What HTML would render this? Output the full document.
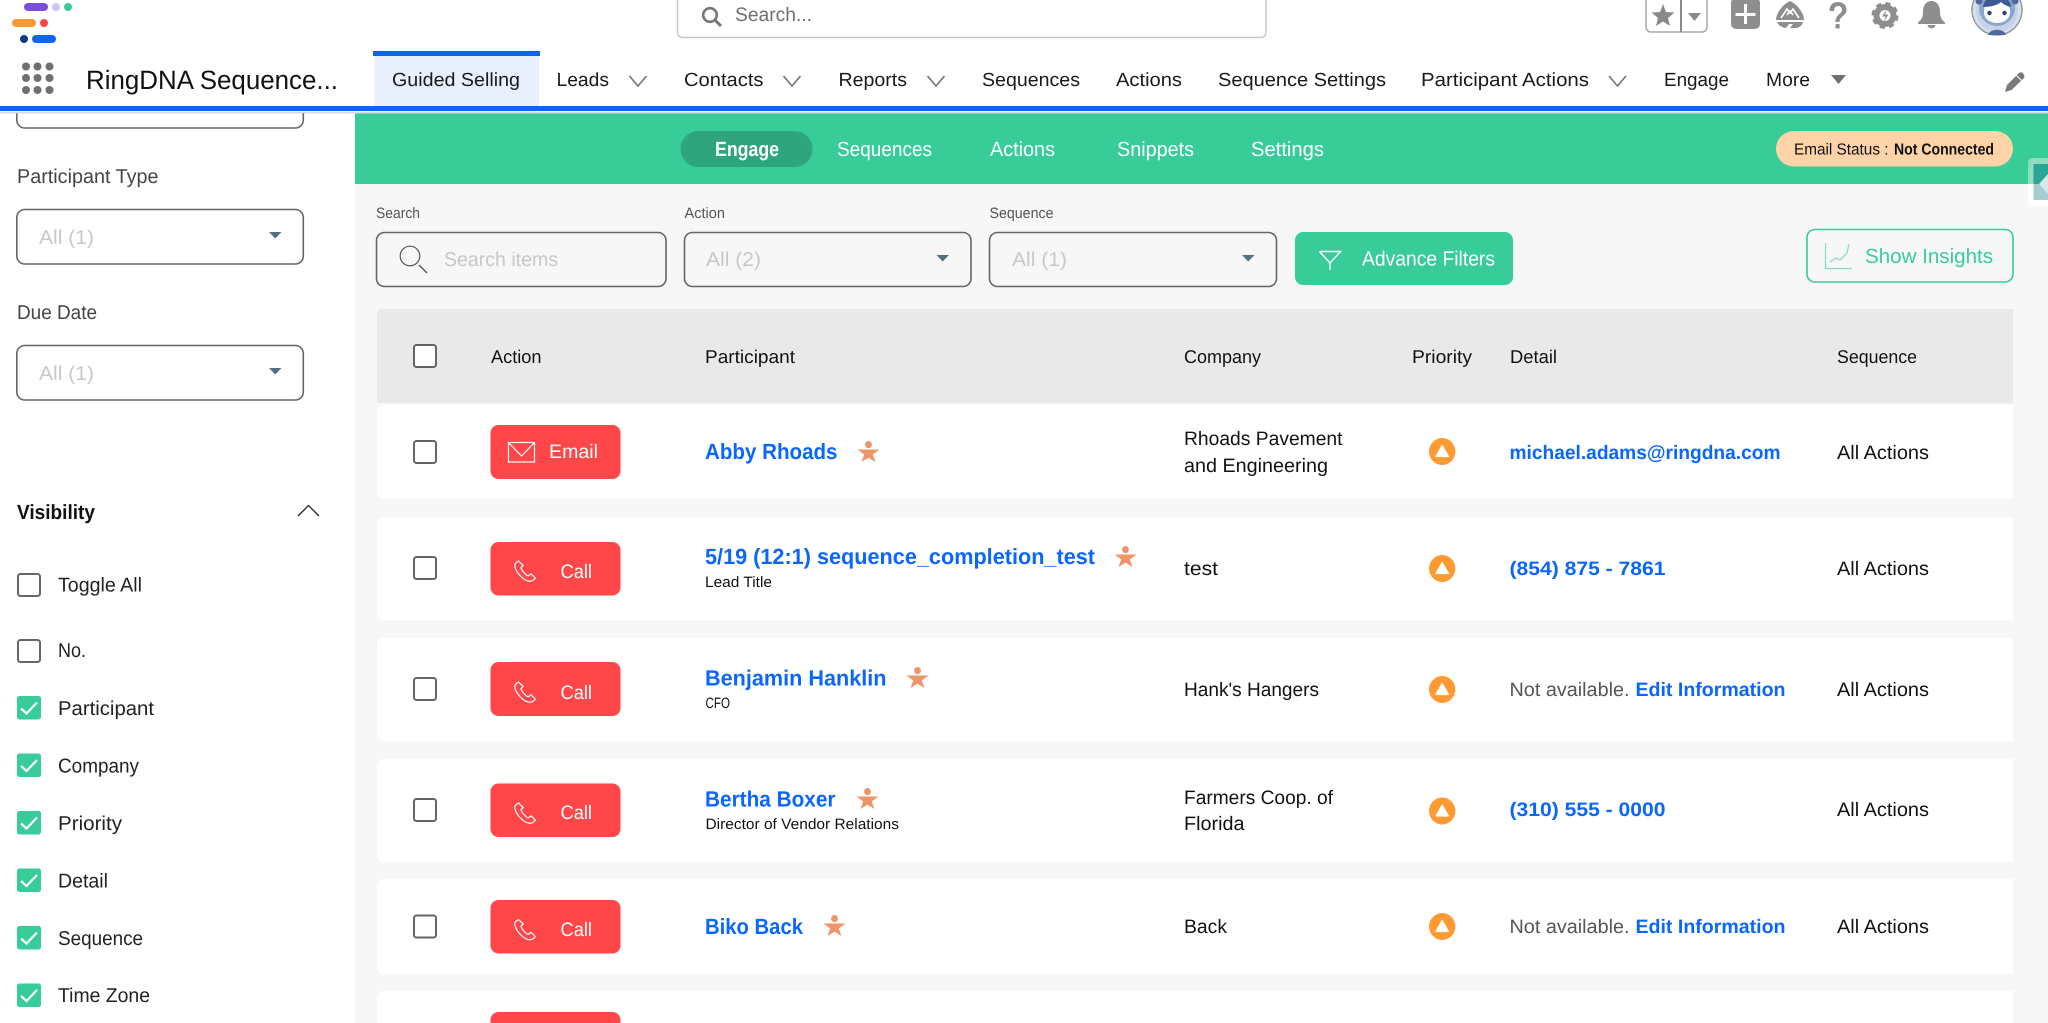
<!DOCTYPE html>
<html lang="en">
<head>
<meta charset="utf-8">
<title>RingDNA Sequence</title>
<style>
html,body{margin:0;padding:0;width:2048px;height:1023px;overflow:hidden;background:#fff}
svg{display:block}
text{font-family:"Liberation Sans",Arial,sans-serif;text-rendering:geometricPrecision}
.n{font-size:19px;fill:#1a1a1a}
.l{font-size:20px;fill:#444}
.s{font-size:15px;fill:#555}
.p{font-size:20px;fill:#c8c8c8}
.h{font-size:18.5px;fill:#111}
.w{font-size:19.5px;fill:#fff}
.b{font-size:22px;fill:#0a66ff;font-weight:700}
.t{font-size:15px;fill:#111}
.c{font-size:19.5px;fill:#111}
.d{font-size:19.5px;fill:#0a66ff;font-weight:700}
.g{font-size:19.5px;fill:#555}
.v{font-size:20px;fill:#222}
.e{font-size:20.5px;fill:#fff}
.sel{fill:none;stroke:#666;stroke-width:1.6}
.chev{fill:none;stroke:#777;stroke-width:1.7}
</style>
</head>
<body>
<svg width="2048" height="1023" viewBox="0 0 2048 1023" xmlns="http://www.w3.org/2000/svg">
<defs>
<g id="person" fill="#ef9469"><ellipse cx="11" cy="3.6" rx="3.4" ry="3.6"/><path d="M0 8.5 L22 8.5 L15.3 13.5 L18 21 L11 16.6 L4 21 L6.7 13.5 Z"/></g>
<path id="phone" fill="none" stroke="#fff" stroke-width="1.2" d="M4.5 1 L1.6 3.2 C-0.4 5.5 2 11.5 6 15.5 C10 20 15 22.5 18.5 20.6 L21.5 18.2 L17 13.8 L14.2 16 C11.5 15 7.5 10.2 7 7.6 L9.3 5.5 Z"/>
<g id="cb"><rect x="1" y="1" width="22" height="22" rx="2.5" fill="#fff" stroke="#666" stroke-width="2"/></g>
<g id="ck"><rect width="24" height="23.5" rx="2.5" fill="#38cc98"/><path d="M4 12.5 L9.5 17.5 L20 6.5" fill="none" stroke="#fff" stroke-width="2.2"/></g>
<g id="pri"><ellipse cx="13.2" cy="13.5" rx="13.2" ry="13.5" fill="#ff9a33"/><path d="M13.2 7.5 L19.5 18.5 L6.9 18.5 Z" fill="#fff" stroke="#fff" stroke-width="1.2" stroke-linejoin="round"/></g>
<path id="chev" class="chev" d="M0 0 L8.5 10 L17 0"/>
<path id="arr" fill="#54707f" d="M0 0 H12.5 L6.2 6.5 Z"/>
</defs>

<!-- sidebar -->
<rect x="0" y="100" width="355" height="923" fill="#fff"/>
<rect x="16.8" y="90" width="286.5" height="38" rx="8" class="sel"/>
<text x="17" y="183" class="l" textLength="141.5" lengthAdjust="spacingAndGlyphs">Participant Type</text>
<rect x="16.8" y="209.5" width="286.5" height="54.5" rx="8" class="sel"/>
<text x="39" y="244" class="p" textLength="55" lengthAdjust="spacingAndGlyphs">All (1)</text>
<use href="#arr" x="269" y="232"/>
<text x="17" y="319" class="l" textLength="80" lengthAdjust="spacingAndGlyphs">Due Date</text>
<rect x="16.8" y="345.5" width="286.5" height="54.5" rx="8" class="sel"/>
<text x="39" y="380" class="p" textLength="55" lengthAdjust="spacingAndGlyphs">All (1)</text>
<use href="#arr" x="269" y="368"/>
<text x="17" y="519" font-size="20.5" font-weight="700" fill="#111" textLength="78" lengthAdjust="spacingAndGlyphs">Visibility</text>
<path d="M298 516 L308.5 505.5 L319 516" fill="none" stroke="#222" stroke-width="1.3"/>
<use href="#cb" x="17" y="573"/>
<text x="58" y="591.5" class="v" textLength="84" lengthAdjust="spacingAndGlyphs">Toggle All</text>
<use href="#cb" x="17" y="639"/>
<text x="58" y="657" class="v" textLength="28" lengthAdjust="spacingAndGlyphs">No.</text>
<use href="#ck" x="17" y="696"/>
<text x="58" y="715" class="v" textLength="96" lengthAdjust="spacingAndGlyphs">Participant</text>
<use href="#ck" x="17" y="753.5"/>
<text x="58" y="772.5" class="v" textLength="81" lengthAdjust="spacingAndGlyphs">Company</text>
<use href="#ck" x="17" y="811"/>
<text x="58" y="830" class="v" textLength="64" lengthAdjust="spacingAndGlyphs">Priority</text>
<use href="#ck" x="17" y="868.5"/>
<text x="58" y="887.7" class="v" textLength="50" lengthAdjust="spacingAndGlyphs">Detail</text>
<use href="#ck" x="17" y="926"/>
<text x="58" y="945" class="v" textLength="85" lengthAdjust="spacingAndGlyphs">Sequence</text>
<use href="#ck" x="17" y="983.5"/>
<text x="58" y="1002" class="v" textLength="92" lengthAdjust="spacingAndGlyphs">Time Zone</text>

<!-- content -->
<rect x="355" y="113" width="1693" height="910" fill="#f7f7f7"/>
<rect x="355" y="113.5" width="1693" height="70.5" fill="#38cc98"/>
<rect x="680.5" y="131" width="132" height="36" rx="18" fill="#2ea57c"/>
<text x="715" y="156" class="e" font-weight="700" textLength="64" lengthAdjust="spacingAndGlyphs">Engage</text>
<text x="837" y="156" class="e" textLength="95" lengthAdjust="spacingAndGlyphs">Sequences</text>
<text x="990" y="156" class="e" textLength="65" lengthAdjust="spacingAndGlyphs">Actions</text>
<text x="1117" y="156" class="e" textLength="77" lengthAdjust="spacingAndGlyphs">Snippets</text>
<text x="1251" y="156" class="e" textLength="73" lengthAdjust="spacingAndGlyphs">Settings</text>
<rect x="1776" y="131" width="237" height="35.5" rx="17.7" fill="#fdd3a7"/>
<text x="1794" y="154.5" font-size="16" fill="#111" textLength="94.5" lengthAdjust="spacingAndGlyphs">Email Status :</text>
<text x="1894" y="154.5" font-size="16" font-weight="700" fill="#111" textLength="100" lengthAdjust="spacingAndGlyphs">Not Connected</text>
<!-- side handle -->
<path d="M2048 158 H2033 Q2028 158 2028 163 V184 H2048 Z" fill="#8fdcc0"/>
<path d="M2048 206 H2033 Q2028 206 2028 201 V184 H2048 Z" fill="#fff"/>
<rect x="2033.5" y="164" width="15" height="20" fill="#2ba696"/>
<rect x="2033.5" y="184" width="15" height="16" fill="#a6ced2"/>
<path d="M2048 174 L2039 184 L2048 194 Z" fill="#d8e8e8"/>

<!-- filters -->
<text x="376" y="218" class="s" textLength="44" lengthAdjust="spacingAndGlyphs">Search</text>
<rect x="376.5" y="232.5" width="289.5" height="54" rx="8" class="sel"/>
<circle cx="410" cy="256" r="9.8" fill="none" stroke="#555" stroke-width="1.2"/>
<path d="M419 265 L427 273" stroke="#555" stroke-width="1.4"/>
<text x="444" y="266" class="p" textLength="114" lengthAdjust="spacingAndGlyphs">Search items</text>
<text x="684.5" y="218" class="s" textLength="40.5" lengthAdjust="spacingAndGlyphs">Action</text>
<rect x="684.5" y="232.5" width="286.5" height="54" rx="8" class="sel"/>
<text x="706" y="266" class="p" textLength="55" lengthAdjust="spacingAndGlyphs">All (2)</text>
<use href="#arr" x="936.5" y="255"/>
<text x="989.5" y="218" class="s" textLength="64" lengthAdjust="spacingAndGlyphs">Sequence</text>
<rect x="989.5" y="232.5" width="287" height="54" rx="8" class="sel"/>
<text x="1012" y="266" class="p" textLength="55" lengthAdjust="spacingAndGlyphs">All (1)</text>
<use href="#arr" x="1242" y="255"/>
<rect x="1295" y="232" width="218" height="53" rx="8" fill="#38cc98"/>
<path d="M1319.5 251.5 H1340.5 L1330 263 V270 M1319.5 251.5 L1330 263" fill="none" stroke="#fff" stroke-width="1.4"/>
<text x="1362" y="265.5" class="e" textLength="133" lengthAdjust="spacingAndGlyphs">Advance Filters</text>
<rect x="1807" y="229.5" width="206" height="52.5" rx="8" fill="none" stroke="#38cc98" stroke-width="1.6"/>
<path d="M1825.5 243 V268.5 H1852 M1830 262 L1836 258 L1840 260 L1847 253 L1849 244" fill="none" stroke="#82dcbd" stroke-width="1.2"/>
<text x="1865" y="263" font-size="20.5" fill="#38cc98" textLength="128" lengthAdjust="spacingAndGlyphs">Show Insights</text>

<!-- table header -->
<path d="M377 403 V315 Q377 309 383 309 H2013 V403 Z" fill="#e9e9e9"/>
<use href="#cb" x="413" y="344"/>
<text x="491" y="363" class="h" textLength="50.5" lengthAdjust="spacingAndGlyphs">Action</text>
<text x="705" y="363" class="h" textLength="90" lengthAdjust="spacingAndGlyphs">Participant</text>
<text x="1184" y="363" class="h" textLength="77" lengthAdjust="spacingAndGlyphs">Company</text>
<text x="1412" y="363" class="h" textLength="60" lengthAdjust="spacingAndGlyphs">Priority</text>
<text x="1510" y="363" class="h" textLength="47" lengthAdjust="spacingAndGlyphs">Detail</text>
<text x="1837" y="363" class="h" textLength="80" lengthAdjust="spacingAndGlyphs">Sequence</text>

<!-- row 1 -->
<path d="M385 405 H2013 V499 H385 Q377 499 377 491 V413 Q377 405 385 405 Z" fill="#fff"/>
<use href="#cb" x="413" y="440"/>
<rect x="490.5" y="425" width="130" height="54" rx="8" fill="#ff4648"/>
<rect x="508.5" y="442.5" width="26" height="19.5" fill="none" stroke="#fff" stroke-width="1.2"/>
<path d="M508.5 442.5 L521.5 456 L534.5 442.5" fill="none" stroke="#fff" stroke-width="1.2"/>
<text x="549" y="458" class="w" textLength="49" lengthAdjust="spacingAndGlyphs">Email</text>
<text x="705" y="459" class="b" textLength="132.5" lengthAdjust="spacingAndGlyphs">Abby Rhoads</text>
<use href="#person" x="857.5" y="441"/>
<text x="1184" y="445" class="c" textLength="158.5" lengthAdjust="spacingAndGlyphs">Rhoads Pavement</text>
<text x="1184" y="472" class="c" textLength="144" lengthAdjust="spacingAndGlyphs">and Engineering</text>
<use href="#pri" x="1429" y="438"/>
<text x="1509.5" y="459" class="d" textLength="271" lengthAdjust="spacingAndGlyphs">michael.adams@ringdna.com</text>
<text x="1837" y="459" class="c" textLength="92" lengthAdjust="spacingAndGlyphs">All Actions</text>

<!-- row 2 -->
<path d="M385 517 H2013 V620 H385 Q377 620 377 612 V525 Q377 517 385 517 Z" fill="#fff"/>
<use href="#cb" x="413" y="556"/>
<rect x="490.5" y="542" width="130" height="53.5" rx="8" fill="#ff4648"/>
<use href="#phone" x="514" y="560"/>
<text x="560.5" y="578" class="w" textLength="31.5" lengthAdjust="spacingAndGlyphs">Call</text>
<text x="705" y="564" class="b" textLength="390" lengthAdjust="spacingAndGlyphs">5/19 (12:1) sequence_completion_test</text>
<use href="#person" x="1114.5" y="546"/>
<text x="705" y="587" class="t" textLength="67" lengthAdjust="spacingAndGlyphs">Lead Title</text>
<text x="1184" y="575" class="c" textLength="34" lengthAdjust="spacingAndGlyphs">test</text>
<use href="#pri" x="1429" y="555"/>
<text x="1509.5" y="575" class="d" textLength="156" lengthAdjust="spacingAndGlyphs">(854) 875 - 7861</text>
<text x="1837" y="575" class="c" textLength="92" lengthAdjust="spacingAndGlyphs">All Actions</text>

<!-- row 3 -->
<path d="M385 638 H2013 V741 H385 Q377 741 377 733 V646 Q377 638 385 638 Z" fill="#fff"/>
<use href="#cb" x="413" y="677"/>
<rect x="490.5" y="662" width="130" height="54" rx="8" fill="#ff4648"/>
<use href="#phone" x="514" y="681"/>
<text x="560.5" y="699" class="w" textLength="31.5" lengthAdjust="spacingAndGlyphs">Call</text>
<text x="705" y="685.5" class="b" textLength="181.5" lengthAdjust="spacingAndGlyphs">Benjamin Hanklin</text>
<use href="#person" x="906.5" y="667"/>
<text x="705.5" y="708" class="t" textLength="24.5" lengthAdjust="spacingAndGlyphs">CFO</text>
<text x="1184" y="696" class="c" textLength="135" lengthAdjust="spacingAndGlyphs">Hank's Hangers</text>
<use href="#pri" x="1429" y="676"/>
<text x="1509.5" y="696" class="g" textLength="120" lengthAdjust="spacingAndGlyphs">Not available.</text>
<text x="1635.5" y="696" class="d" textLength="150" lengthAdjust="spacingAndGlyphs">Edit Information</text>
<text x="1837" y="696" class="c" textLength="92" lengthAdjust="spacingAndGlyphs">All Actions</text>

<!-- row 4 -->
<path d="M385 759 H2013 V862 H385 Q377 862 377 854 V767 Q377 759 385 759 Z" fill="#fff"/>
<use href="#cb" x="413" y="798"/>
<rect x="490.5" y="783.5" width="130" height="53.5" rx="8" fill="#ff4648"/>
<use href="#phone" x="514" y="802"/>
<text x="560.5" y="819" class="w" textLength="31.5" lengthAdjust="spacingAndGlyphs">Call</text>
<text x="705" y="806.5" class="b" textLength="130.5" lengthAdjust="spacingAndGlyphs">Bertha Boxer</text>
<use href="#person" x="856.5" y="788"/>
<text x="705.5" y="829" class="t" textLength="193.5" lengthAdjust="spacingAndGlyphs">Director of Vendor Relations</text>
<text x="1184" y="804" class="c" textLength="149" lengthAdjust="spacingAndGlyphs">Farmers Coop. of</text>
<text x="1184" y="830" class="c" textLength="60.5" lengthAdjust="spacingAndGlyphs">Florida</text>
<use href="#pri" x="1429" y="797.5"/>
<text x="1509.5" y="816" class="d" textLength="156" lengthAdjust="spacingAndGlyphs">(310) 555 - 0000</text>
<text x="1837" y="816" class="c" textLength="92" lengthAdjust="spacingAndGlyphs">All Actions</text>

<!-- row 5 -->
<path d="M385 879 H2013 V974 H385 Q377 974 377 966 V887 Q377 879 385 879 Z" fill="#fff"/>
<use href="#cb" x="413" y="914.5"/>
<rect x="490.5" y="900" width="130" height="53.5" rx="8" fill="#ff4648"/>
<use href="#phone" x="514" y="918.5"/>
<text x="560.5" y="936" class="w" textLength="31.5" lengthAdjust="spacingAndGlyphs">Call</text>
<text x="705" y="934" class="b" textLength="98" lengthAdjust="spacingAndGlyphs">Biko Back</text>
<use href="#person" x="823.5" y="915"/>
<text x="1184" y="933" class="c" textLength="43" lengthAdjust="spacingAndGlyphs">Back</text>
<use href="#pri" x="1429" y="913"/>
<text x="1509.5" y="933" class="g" textLength="120" lengthAdjust="spacingAndGlyphs">Not available.</text>
<text x="1635.5" y="933" class="d" textLength="150" lengthAdjust="spacingAndGlyphs">Edit Information</text>
<text x="1837" y="933" class="c" textLength="92" lengthAdjust="spacingAndGlyphs">All Actions</text>

<!-- row 6 -->
<path d="M385 991 H2013 V1040 H377 V999 Q377 991 385 991 Z" fill="#fff"/>
<rect x="490.5" y="1012" width="130" height="54" rx="8" fill="#ff4648"/>

<!-- header -->
<rect x="0" y="0" width="2048" height="106" fill="#fff"/>
<rect x="0" y="106" width="2048" height="5" fill="#0a66f0"/>
<rect x="0" y="111" width="2048" height="1" fill="#f2f2f2"/>
<rect x="0" y="112" width="2048" height="1.4" fill="#d8d8d8"/>
<!-- logo -->
<rect x="24" y="3" width="24" height="8" rx="4" fill="#7a4fe0"/>
<ellipse cx="56" cy="7" rx="4" ry="4" fill="#cfc4f5"/>
<ellipse cx="68" cy="7" rx="4" ry="4" fill="#38cc98"/>
<rect x="12" y="19" width="24" height="8" rx="4" fill="#ff9a33"/>
<ellipse cx="44" cy="23" rx="4" ry="4" fill="#ff4648"/>
<ellipse cx="24" cy="39" rx="4" ry="4" fill="#0c3b87"/>
<rect x="32" y="35" width="24" height="8" rx="4" fill="#0a66ff"/>
<!-- waffle -->
<g fill="#707070">
<circle cx="26" cy="66.5" r="4"/><circle cx="37.5" cy="66.5" r="4"/><circle cx="49.5" cy="66.5" r="4"/>
<circle cx="26" cy="78" r="4"/><circle cx="37.5" cy="78" r="4"/><circle cx="49.5" cy="78" r="4"/>
<circle cx="26" cy="90" r="4"/><circle cx="37.5" cy="90" r="4"/><circle cx="49.5" cy="90" r="4"/>
</g>
<text x="86" y="89" font-size="26.5" fill="#111" textLength="252" lengthAdjust="spacingAndGlyphs">RingDNA Sequence...</text>
<!-- active tab -->
<rect x="374.5" y="56" width="164.5" height="50" fill="#e8effd"/>
<rect x="373" y="51" width="167" height="5" fill="#0a66f0"/>
<text x="392" y="86" class="n" textLength="128" lengthAdjust="spacingAndGlyphs">Guided Selling</text>
<text x="556.5" y="86" class="n" textLength="52.5" lengthAdjust="spacingAndGlyphs">Leads</text>
<use href="#chev" x="629.5" y="76"/>
<text x="684" y="86" class="n" textLength="79.5" lengthAdjust="spacingAndGlyphs">Contacts</text>
<use href="#chev" x="783.5" y="76"/>
<text x="838.5" y="86" class="n" textLength="68.5" lengthAdjust="spacingAndGlyphs">Reports</text>
<use href="#chev" x="927.5" y="76"/>
<text x="982" y="86" class="n" textLength="98" lengthAdjust="spacingAndGlyphs">Sequences</text>
<text x="1116" y="86" class="n" textLength="66" lengthAdjust="spacingAndGlyphs">Actions</text>
<text x="1218" y="86" class="n" textLength="168" lengthAdjust="spacingAndGlyphs">Sequence Settings</text>
<text x="1421" y="86" class="n" textLength="168" lengthAdjust="spacingAndGlyphs">Participant Actions</text>
<use href="#chev" x="1609" y="76"/>
<text x="1664" y="86" class="n" textLength="65" lengthAdjust="spacingAndGlyphs">Engage</text>
<text x="1766" y="86" class="n" textLength="44" lengthAdjust="spacingAndGlyphs">More</text>
<path d="M1831 75 H1846 L1838.5 84 Z" fill="#707070"/>
<!-- pencil -->
<path d="M2005 92 L2007 85 L2019 73 Q2021 71.5 2023 73 L2024 75 Q2025 77 2023.5 78.5 L2011.5 90 Z" fill="#7a7a7a"/>
<path d="M2016.5 75.5 L2021.5 80.5" stroke="#fff" stroke-width="1"/>
<!-- top search -->
<rect x="677.5" y="-6" width="588.5" height="43.5" rx="5" fill="#fff" stroke="#c9c9c9" stroke-width="1.5"/>
<circle cx="710" cy="15" r="6.8" fill="none" stroke="#777" stroke-width="2.6"/>
<path d="M715 20 L721 26" stroke="#777" stroke-width="3"/>
<text x="735" y="21" font-size="19.5" fill="#707070" textLength="77" lengthAdjust="spacingAndGlyphs">Search...</text>
<!-- top right icons -->
<rect x="1646" y="-6" width="61" height="38" rx="5" fill="#fff" stroke="#a8a8a8" stroke-width="1.5"/>
<rect x="1680" y="0" width="2" height="32" fill="#8a8a8a"/>
<path d="M1663 4 L1666 12 L1674.5 12.5 L1668 18 L1670 26 L1663 21.5 L1656 26 L1658 18 L1651.5 12.5 L1660 12 Z" fill="#8a8a8a"/>
<path d="M1688 13 H1701 L1694.5 21 Z" fill="#8a8a8a"/>
<rect x="1731" y="-2" width="29" height="31" rx="5" fill="#8e8e8e"/>
<path d="M1745.5 4 V24 M1735.5 14.5 H1755.5" stroke="#fff" stroke-width="3"/>
<path d="M1790 1 C1797 4 1804 13 1804 20 L1776 20 C1776 13 1783 4 1790 1Z" fill="#8e8e8e"/>
<path d="M1781 18 L1787 9 L1790 13 L1793 9 L1799 18 M1787 15 L1790 11 L1793 15" fill="none" stroke="#fff" stroke-width="1.6"/>
<path d="M1777 22 H1803 Q1802 27 1796 28 L1790 28 L1793 24 H1789 L1786 28 Q1779 27 1777 22Z" fill="#8e8e8e"/>
<path d="M1829.5 11 C1829.5 4 1834 2 1838 2 C1843 2 1846.5 5 1846.5 10 C1846.5 16 1839.5 16 1839.5 22 H1835.5 C1835.5 14 1842 14 1842 10 C1842 7.5 1840.5 6 1838 6 C1835.5 6 1834 8 1834 11 Z" fill="#8e8e8e"/>
<rect x="1835.5" y="24" width="4.2" height="4.5" rx="1" fill="#8e8e8e"/>
<circle cx="1885" cy="15.5" r="8.5" fill="none" stroke="#8e8e8e" stroke-width="6"/>
<circle cx="1885" cy="15.5" r="11.5" fill="none" stroke="#8e8e8e" stroke-width="4" stroke-dasharray="5 4.03"/>
<path d="M1887 9 L1882 16.5 H1885.5 L1883.5 22 L1888.5 14.5 H1885 Z" fill="#8e8e8e"/>
<path d="M1931.5 1 C1937 1 1940 6 1940 11 C1940 17 1941 19 1945 22.5 V24 H1918 V22.5 C1922 19 1923 17 1923 11 C1923 6 1926 1 1931.5 1Z" fill="#8e8e8e"/>
<path d="M1927.5 25 H1935.5 C1935 29.5 1928 29.5 1927.5 25Z" fill="#8e8e8e"/>
<!-- avatar -->
<circle cx="1997" cy="10" r="25" fill="#d6dfec" stroke="#9a9a9a" stroke-width="1.5"/>
<circle cx="1997" cy="11" r="21" fill="#c6d3e6"/>
<circle cx="1997" cy="8" r="18" fill="#8aa5cb"/>
<path d="M1984 12 C1984 1 1991 -3 1997 -3 C2004 -3 2010 2 2010 12 C2010 18 2005 23 1997 23 C1989 23 1984 18 1984 12Z" fill="#fff"/>
<path d="M1983 7 C1984 -1 1991 -5 1997 -5 C2005 -5 2011 1 2011 7 C2006 6 2003 4 2001 2 C1998 5 1991 7 1983 7Z" fill="#3d5a94"/>
<circle cx="1989.5" cy="13" r="2.2" fill="#2b3f70"/>
<circle cx="2004.5" cy="13" r="2.2" fill="#2b3f70"/>
<path d="M1988 35 C1990 28 2004 28 2006 35Z" fill="#4d6a9f"/>
<circle cx="1979" cy="1" r="3.5" fill="#4d6a9f"/>
<circle cx="2015" cy="1" r="3.5" fill="#4d6a9f"/>
</svg>
</body>
</html>
